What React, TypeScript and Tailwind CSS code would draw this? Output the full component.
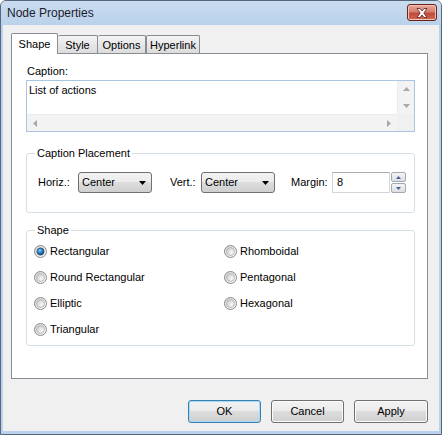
import React from "react";

const shapes = [
  { label: "Rectangular", checked: true },
  { label: "Round Rectangular" },
  { label: "Elliptic" },
  { label: "Triangular" },
  { label: "Rhomboidal" },
  { label: "Pentagonal" },
  { label: "Hexagonal" },
];

const tabs = [
  { label: "Shape", w: "w-[47px]" },
  { label: "Style", w: "w-[40px]" },
  { label: "Options", w: "w-[48px]" },
  { label: "Hyperlink", w: "w-[54px]" },
];

function Radio({ checked }: { checked?: boolean }) {
  return (
    <svg width="13" height="13" viewBox="0 0 13 13" className="shrink-0">
      <defs>
        <linearGradient id="radioRing" x1="0" y1="0" x2="1" y2="1">
          <stop offset="0" stopColor="#d4d4d4" />
          <stop offset="1" stopColor="#ffffff" />
        </linearGradient>
        <radialGradient id="radioInner" cx="0.65" cy="0.65" r="0.7">
          <stop offset="0" stopColor="#fbfbfb" />
          <stop offset="1" stopColor="#c9c9c9" />
        </radialGradient>
        <radialGradient id="radioDot" cx="0.4" cy="0.35" r="0.7">
          <stop offset="0" stopColor="#8fd8ff" />
          <stop offset="0.45" stopColor="#2a86d0" />
          <stop offset="1" stopColor="#0d3e73" />
        </radialGradient>
      </defs>
      <circle cx="6.5" cy="6.5" r="6" fill="url(#radioRing)" stroke="#8a8a8a" />
      <circle cx="6.5" cy="6.5" r="4" fill="url(#radioInner)" stroke="#b4b4b4" strokeWidth="0.8" />
      {checked && <circle cx="6.5" cy="6.5" r="3.4" fill="url(#radioDot)" stroke="#18456f" strokeWidth="0.6" />}
    </svg>
  );
}

function Combo({ value }: { value: string }) {
  return (
    <div className="w-[74px] h-[21px] flex items-center pl-[3px] pr-[5px] border border-[#707070] rounded-[3px] bg-[linear-gradient(#f2f2f2_0%,#ebebeb_50%,#dddddd_50%,#cfcfcf_100%)]">
      <span>{value}</span>
      <svg width="7" height="4" viewBox="0 0 7 4" className="ml-auto">
        <path d="M0 0h7L3.5 4z" fill="#000" />
      </svg>
    </div>
  );
}

function GroupBox({ title, className, children }: { title: string; className: string; children: React.ReactNode }) {
  return (
    <div className={`relative w-[389px] border border-[#d5dfe5] rounded-[3px] ${className}`}>
      <span className="absolute -top-[7px] left-[8px] px-[2px] bg-white">{title}</span>
      {children}
    </div>
  );
}

function Button({ label, primary }: { label: string; primary?: boolean }) {
  return (
    <div
      className={`h-[23px] flex items-center justify-center rounded-[3px] border bg-[linear-gradient(#f2f2f2_0%,#ebebeb_50%,#dddddd_50%,#cfcfcf_100%)] ${
        label === "Apply" ? "w-[74px]" : "w-[73px]"
      } ${primary ? "border-[#3c7fb1] shadow-[inset_0_0_0_1px_#9fdcf8]" : "border-[#707070] shadow-[inset_0_0_0_1px_#fbfbfb]"}`}
    >
      {label}
    </div>
  );
}

export default function App() {
  return (
    <div className="w-[442px] h-[435px] flex flex-col border border-[#56687e] rounded-t-[6px] bg-[#bad2eb] font-['Liberation_Sans',Arial,sans-serif] text-[11px] leading-[13px] text-black overflow-hidden">
      {/* title bar */}
      <div className="h-[24px] flex items-start bg-linear-to-b from-[#cadcf0] to-[#b9d1ea]">
        <span className="ml-[6px] mt-[5px] text-[12px] leading-[14px] text-[#1c1c2c]">Node Properties</span>
        <div className="ml-auto mt-[3px] mr-[4px] w-[30px] h-[17px] flex items-center justify-center rounded-[3px] border border-[#6b2219] bg-[linear-gradient(#e9a99c_0%,#d47e6f_45%,#c24a3a_55%,#cf6a55_100%)] shadow-[inset_0_0_0_1px_#f1c2b6]">
          <svg width="12" height="10" viewBox="0 0 12 10">
            <path
              d="M1 0.5h3l2 2.5 2-2.5h3L7.8 5 11 9.5H8L6 7 4 9.5H1L4.2 5z"
              fill="#ffffff"
              stroke="#5a1d16"
              strokeWidth="0.8"
              strokeLinejoin="round"
            />
          </svg>
        </div>
      </div>

      {/* client area */}
      <div className="mx-[2px] h-[406px] bg-[#f0f0f0] flex flex-col pt-[8px] pl-[8px]">
        {/* tabs */}
        <div className="flex items-end h-[20px]">
          {tabs.map((t, i) =>
            i === 0 ? (
              <div
                key={t.label}
                className={`relative z-10 ${t.w} h-[21px] -mb-px flex items-start justify-center pt-[4px] bg-white border border-b-0 border-[#898c95] rounded-t-[2px]`}
              >
                {t.label}
              </div>
            ) : (
              <div
                key={t.label}
                className={`${t.w} h-[18px] flex items-start justify-center pt-[3px] border border-b-0 border-[#898c95] rounded-t-[2px] bg-linear-to-b from-[#f3f3f3] to-[#dcdcdc] ${
                  i === 1 ? "border-l-0" : i === 2 ? "border-l-0" : ""
                }`}
              >
                {t.label}
              </div>
            ),
          )}
        </div>

        {/* tab page */}
        <div className="w-[417px] h-[326px] bg-white border border-[#898c95] flex flex-col pl-[14px] pt-[11px]">
          <span className="pl-px">Caption:</span>

          {/* caption text box */}
          <div className="mt-[2px] w-[389px] h-[52px] border border-[#a9c5e2] flex flex-col">
            <div className="flex h-[33px]">
              <div className="flex-1 pl-[2px] pt-[3px]">List of actions</div>
              <div className="w-[17px] flex flex-col items-center justify-between py-[6px] bg-[#f3f3f3] border-l border-[#ececec]">
                <svg width="7" height="4" viewBox="0 0 7 4">
                  <path d="M0 4L3.5 0L7 4z" fill="#a8a8a8" />
                </svg>
                <svg width="7" height="4" viewBox="0 0 7 4">
                  <path d="M0 0h7L3.5 4z" fill="#a8a8a8" />
                </svg>
              </div>
            </div>
            <div className="flex h-[17px]">
              <div className="flex-1 flex items-center justify-between px-[6px] bg-[#f3f3f3] border-t border-[#ececec]">
                <svg width="4" height="7" viewBox="0 0 4 7">
                  <path d="M4 0v7L0 3.5z" fill="#a8a8a8" />
                </svg>
                <svg width="4" height="7" viewBox="0 0 4 7">
                  <path d="M0 0v7L4 3.5z" fill="#a8a8a8" />
                </svg>
              </div>
              <div className="w-[17px] bg-[#f0f0f0]" />
            </div>
          </div>

          {/* caption placement */}
          <GroupBox title="Caption Placement" className="mt-[21px] h-[60px]">
            <div className="flex items-center h-[21px] mt-[18px] pl-[11px]">
              <span className="w-[40px]">Horiz.:</span>
              <Combo value="Center" />
              <span className="ml-[18px] w-[31px]">Vert.:</span>
              <Combo value="Center" />
              <span className="ml-[16px] w-[41px]">Margin:</span>
              <div className="w-[58px] h-[21px] flex items-center pl-[4px] border border-[#d2d5da] border-t-[#abadb3] bg-white">
                8
              </div>
              <div className="ml-px flex flex-col gap-px">
                <div className="w-[15px] h-[10px] flex items-center justify-center border border-[#a3a9b3] rounded-[2px] bg-linear-to-b from-[#f4f4f4] to-[#dcdfe4]">
                  <svg width="5" height="3" viewBox="0 0 5 3">
                    <path d="M0 3L2.5 0L5 3z" fill="#4a6290" />
                  </svg>
                </div>
                <div className="w-[15px] h-[10px] flex items-center justify-center border border-[#a3a9b3] rounded-[2px] bg-linear-to-b from-[#f4f4f4] to-[#dcdfe4]">
                  <svg width="5" height="3" viewBox="0 0 5 3">
                    <path d="M0 0h5L2.5 3z" fill="#4a6290" />
                  </svg>
                </div>
              </div>
            </div>
          </GroupBox>

          {/* shape */}
          <GroupBox title="Shape" className="mt-[17px] h-[116px]">
            <div className="grid grid-flow-col grid-rows-4 grid-cols-[190px_1fr] auto-rows-[26px] pt-[7px] pl-[7px]">
              {shapes.map((s) => (
                <div key={s.label} className="h-[26px] flex items-center gap-[3px]">
                  <Radio checked={s.checked} />
                  <span>{s.label}</span>
                </div>
              ))}
            </div>
          </GroupBox>
        </div>

        {/* dialog buttons */}
        <div className="mt-[21px] w-[417px] flex justify-end gap-[10px]">
          <Button label="OK" primary />
          <Button label="Cancel" />
          <Button label="Apply" />
        </div>
      </div>
    </div>
  );
}
